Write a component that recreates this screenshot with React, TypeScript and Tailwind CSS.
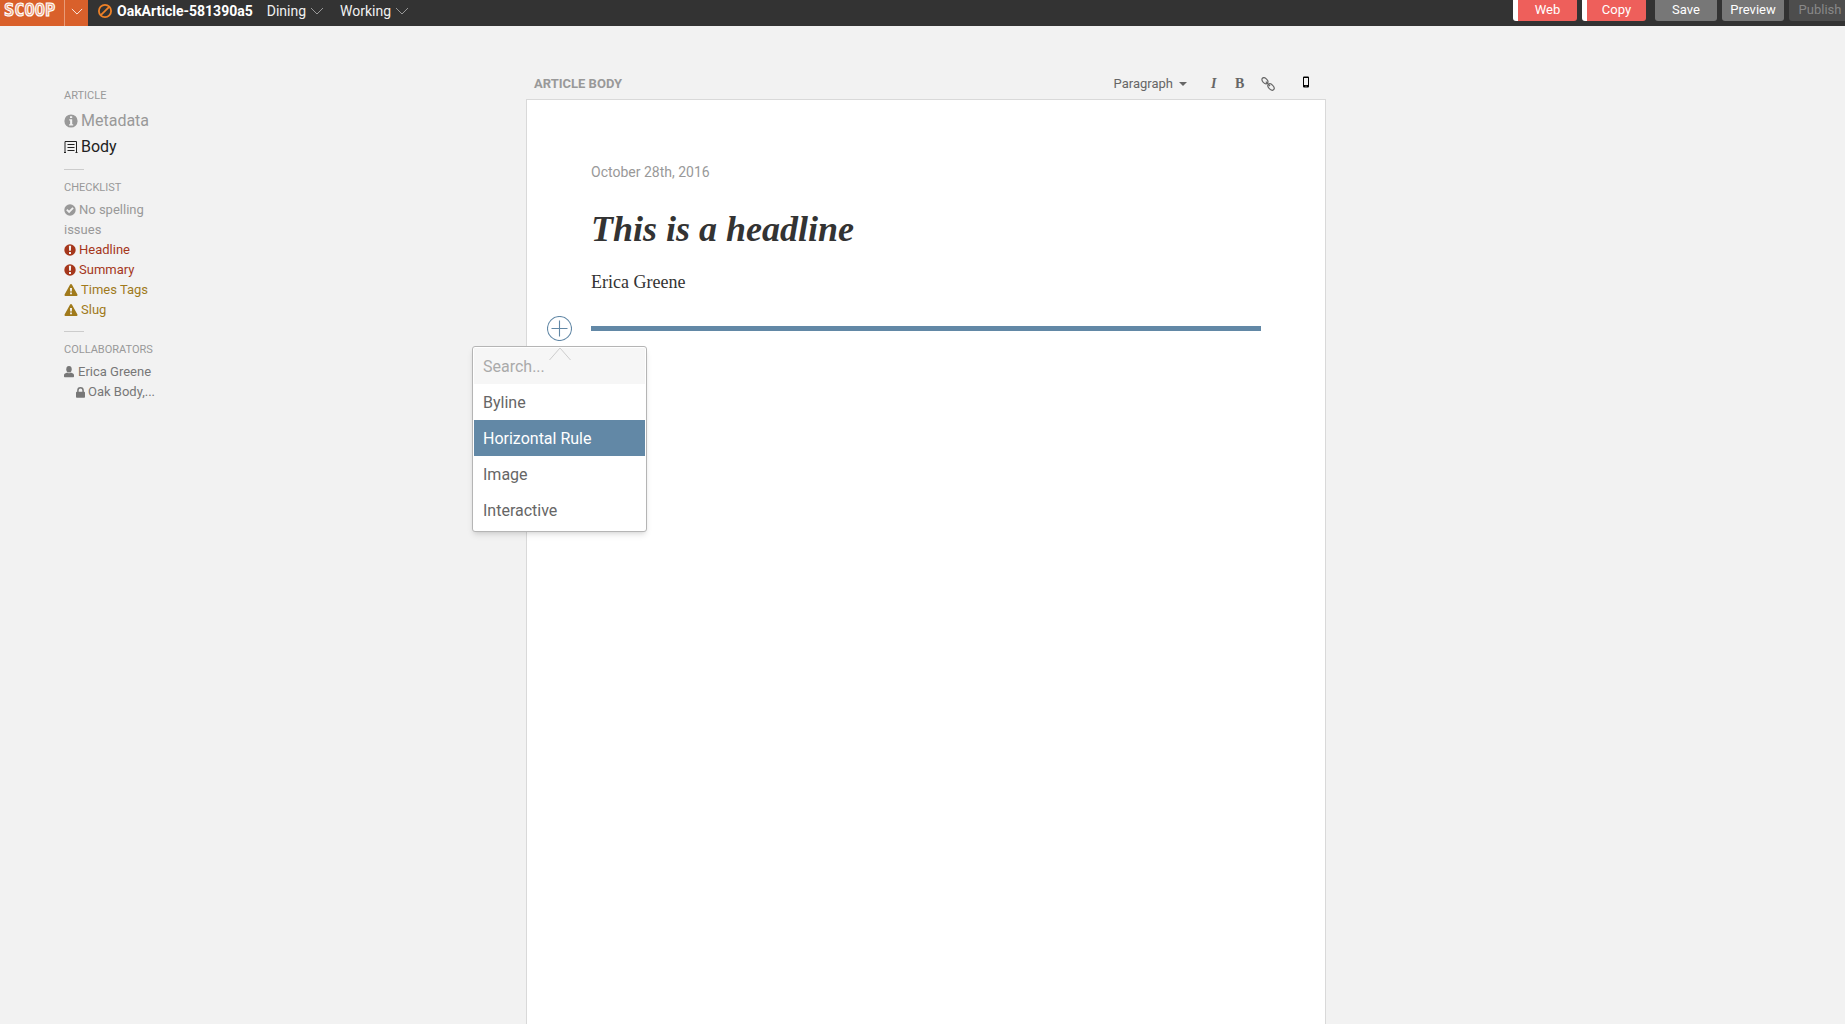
import React, { useState } from "react";

type IconProps = { className?: string };

const ChevronDown = ({ className }: IconProps) => (
  <svg className={className} viewBox="0 0 14 8" fill="none" stroke="currentColor" aria-hidden="true">
    <path d="M1 1l6 6 6-6" />
  </svg>
);

const BanIcon = ({ className }: IconProps) => (
  <svg className={className} viewBox="0 0 14 14" fill="none" stroke="currentColor" strokeWidth="1.800" aria-hidden="true">
    <circle cx="7" cy="7" r="6.100" />
    <path d="M11.200 2.800l-8.400 8.400" />
  </svg>
);

const InfoIcon = ({ className }: IconProps) => (
  <svg className={className} viewBox="0 0 14 14" aria-hidden="true">
    <circle cx="7" cy="7" r="6.600" fill="currentColor" />
    <path d="M6 2.200h2.200V4H6zM5.200 5.200h3v5h1v1.400H5.100v-1.400h1V6.500h-.9z" fill="#f2f2f2" />
  </svg>
);

const BodyIcon = ({ className }: IconProps) => (
  <svg className={className} viewBox="0 0 14 14" fill="none" stroke="currentColor" aria-hidden="true">
    <path d="M1 13V1.500h11.500V13M0 12.500h2M11.500 12.500h2M3.500 4.500h7M3.500 7.500h7M3.500 10.500h7" />
  </svg>
);

const CheckIcon = ({ className }: IconProps) => (
  <svg className={className} viewBox="0 0 12 12" aria-hidden="true">
    <circle cx="6" cy="6" r="5.700" fill="currentColor" />
    <path d="M2.800 5.700l2.300 2.300 4-4.100" fill="none" stroke="#f2f2f2" strokeWidth="1.800" />
  </svg>
);

const AlertIcon = ({ className }: IconProps) => (
  <svg className={className} viewBox="0 0 12 12" aria-hidden="true">
    <circle cx="6" cy="6" r="5.700" fill="currentColor" />
    <path d="M4.900 1.800h2.200l-.2 5H5.100zM5 8h2v1.900H5z" fill="#f2f2f2" />
  </svg>
);

const WarningIcon = ({ className }: IconProps) => (
  <svg className={className} viewBox="0 0 14 12" aria-hidden="true">
    <path d="M7 .1c.4 0 .7.200.9.500l5.500 10c.3.700 0 1.300-.7 1.300H1.300c-.7 0-1-.6-.7-1.300l5.500-10c.2-.3.500-.5.900-.5z" fill="currentColor" />
    <path d="M6 4h2l-.2 3.500H6.200zM6.100 8.600h1.800v1.600H6.100z" fill="#f2f2f2" />
  </svg>
);

const UserIcon = ({ className }: IconProps) => (
  <svg className={className} viewBox="0 0 10 12" fill="currentColor" aria-hidden="true">
    <ellipse cx="5" cy="3.200" rx="2.700" ry="3.200" />
    <path d="M0 9.200c0-1 .7-1.600 1.600-2l1.600-.6c1.100.8 2.500.8 3.600 0l1.600.6c.9.400 1.600 1 1.600 2v1.300c0 .4-.3.700-.7.700H.7c-.4 0-.7-.3-.7-.7z" />
  </svg>
);

const LockIcon = ({ className }: IconProps) => (
  <svg className={className} viewBox="0 0 9 11" aria-hidden="true">
    <rect y="4.700" width="9" height="6" rx=".8" fill="currentColor" />
    <path d="M1.900 5V3.400a2.600 2.600 0 015.200 0V5" fill="none" stroke="currentColor" strokeWidth="1.500" />
  </svg>
);

const LinkIcon = ({ className }: IconProps) => (
  <svg className={className} viewBox="0 0 14 14" fill="none" stroke="currentColor" strokeWidth="1.200" aria-hidden="true">
    <ellipse cx="3.900" cy="3.700" rx="3.500" ry="2.300" transform="rotate(45 3.900 3.700)" />
    <ellipse cx="10" cy="10" rx="3.700" ry="2.400" transform="rotate(45 10 10)" />
    <path d="M4.800 4.700l4.200 4.300" />
  </svg>
);

const PhoneIcon = ({ className }: IconProps) => (
  <svg className={className} viewBox="0 0 8 12" aria-hidden="true">
    <path
      d="M2 .5h4a1 1 0 011 1v9a1 1 0 01-1 1H2a1 1 0 01-1-1v-9a1 1 0 011-1zM2 2v7h4V2z"
      fill="currentColor"
      fillRule="evenodd"
    />
    <path d="M3.500 9.700h1v.8h-1z" fill="#f2f2f2" />
  </svg>
);

const PlusIcon = ({ className }: IconProps) => (
  <svg className={className} viewBox="0 0 25 25" fill="none" stroke="currentColor" strokeWidth="1.100" aria-hidden="true">
    <circle cx="12.500" cy="12.500" r="12" />
    <path d="M12.500 4.500v16M4.500 12.500h16" />
  </svg>
);

const MENU = ["Byline", "Horizontal Rule", "Image", "Interactive"];

function TopBar() {
  return (
    <header className="flex h-[26px] items-start overflow-hidden bg-[#333333] text-sm text-white">
      <a href="#home" aria-label="Scoop home" className="flex h-full w-16 flex-none bg-[#d9602b] pl-1">
        <span className="font-['DejaVu_Sans_Mono',monospace] text-[17px] leading-5 font-bold text-[#eda888] [-webkit-text-stroke:1px_white]">
          SCOOP
        </span>
      </a>
      <button aria-label="Open menu" className="flex h-full w-6 flex-none justify-center border-l border-[#e89b78] bg-[#d9602b] pt-2">
        <ChevronDown className="h-[7px] w-3" />
      </button>
      <nav className="flex h-[22px] min-w-0 flex-1 items-center pl-2.5">
        <BanIcon className="mr-[5px] size-3.5 flex-none text-[#ee8127]" />
        <h1 className="mr-3.5 font-bold">OakArticle-581390a5</h1>
        <button className="mr-4 flex items-center gap-1 text-[#f0f0f0]">
          Dining
          <ChevronDown className="h-2 w-3.5 text-[#999999]" />
        </button>
        <button className="flex items-center gap-1 text-[#f0f0f0]">
          Working
          <ChevronDown className="h-2 w-3.5 text-[#999999]" />
        </button>
      </nav>
      <div className="-mr-1.5 flex h-[21px] flex-none gap-[5px] text-[13px]">
        <button className="w-16 rounded-b-[3px] border-l-[5px] border-white bg-[#ee5f5b]">Web</button>
        <button className="mr-1 w-16 rounded-b-[3px] border-l-[5px] border-white bg-[#ee5f5b]">Copy</button>
        <button className="w-[62px] rounded-b-[3px] bg-[#777777]">Save</button>
        <button className="w-[62px] rounded-b-[3px] bg-[#777777]">Preview</button>
        <button className="w-[62px] rounded-b-[3px] bg-[#4d4d4d] text-[#888888]" disabled>
          Publish
        </button>
      </div>
    </header>
  );
}

function Sidebar() {
  return (
    <aside className="pt-[60px] pl-16 text-[13px] leading-5 text-[#999999]">
      <h2 className="text-[11px] leading-5">ARTICLE</h2>
      <ul className="mt-0.5 text-base leading-[26px]">
        <li>
          <a href="#metadata" className="flex items-center gap-[3px]">
            <InfoIcon className="size-3.5" />
            Metadata
          </a>
        </li>
        <li>
          <a href="#body" className="flex items-center gap-[3px] text-[#222222]">
            <BodyIcon className="size-3.5" />
            Body
          </a>
        </li>
      </ul>
      <hr className="mt-[9px] w-5 border-[#cccccc]" />
      <h2 className="mt-2 text-[11px] leading-5">CHECKLIST</h2>
      <ul className="mt-0.5 w-[100px]">
        <li>
          <CheckIcon className="mr-[3px] mb-0.5 inline size-3" />
          No spelling issues
        </li>
        <li className="flex items-center gap-[3px] text-[#a5371b]">
          <AlertIcon className="size-3" />
          Headline
        </li>
        <li className="flex items-center gap-[3px] text-[#a5371b]">
          <AlertIcon className="size-3" />
          Summary
        </li>
        <li className="flex items-center gap-[3px] text-[#a07a1c]">
          <WarningIcon className="h-3 w-3.5" />
          Times Tags
        </li>
        <li className="flex items-center gap-[3px] text-[#a07a1c]">
          <WarningIcon className="h-3 w-3.5" />
          Slug
        </li>
      </ul>
      <hr className="mt-[11px] w-5 border-[#cccccc]" />
      <h2 className="mt-2 text-[11px] leading-5">COLLABORATORS</h2>
      <ul className="mt-0.5 text-[#777777]">
        <li className="flex items-center gap-1">
          <UserIcon className="h-3 w-2.5" />
          Erica Greene
        </li>
        <li className="flex items-center gap-[3px] pl-3">
          <LockIcon className="h-[11px] w-[9px]" />
          Oak Body,...
        </li>
      </ul>
    </aside>
  );
}

function Toolbar() {
  return (
    <div className="flex h-[73px] items-end justify-between pr-4 pb-1 pl-2 text-[#666666]">
      <h2 className="text-[13px] leading-[22px] font-bold text-[#999999]">ARTICLE BODY</h2>
      <div className="flex h-[22px] items-center">
        <button className="mr-6 flex items-center gap-1.5 text-[13px]">
          Paragraph
          <svg className="h-1 w-2" viewBox="0 0 8 4" aria-hidden="true">
            <path d="M0 0h8L4 4z" fill="currentColor" />
          </svg>
        </button>
        <button aria-label="Italic" className="w-6 text-left font-['Liberation_Serif',serif] text-sm font-bold italic">
          I
        </button>
        <button aria-label="Bold" className="w-[26px] text-left font-['Liberation_Serif',serif] text-sm font-bold">
          B
        </button>
        <button aria-label="Link" className="mr-[27px]">
          <LinkIcon className="size-3.5" />
        </button>
        <button aria-label="Mobile preview" className="mb-1 text-black">
          <PhoneIcon className="h-3 w-2" />
        </button>
      </div>
    </div>
  );
}

function InsertMenu() {
  const [active, setActive] = useState("Horizontal Rule");
  return (
    <div className="absolute top-[30px] -left-[75px] w-[175px] rounded-[3px] border border-[#b5b5b5] bg-white p-px pb-[3px] text-base text-[#666666] shadow-md">
      <input
        aria-label="Search"
        placeholder="Search..."
        className="block h-9 w-full bg-[#f6f6f6] px-[9px] outline-none placeholder:text-[#aaaaaa]"
      />
      <svg className="absolute top-0 left-[76px] h-[13px] w-[22px]" viewBox="0 0 22 13" aria-hidden="true">
        <path d="M.5 13L11 1l10.500 12" fill="#f6f6f6" stroke="#cccccc" />
      </svg>
      {MENU.map((item) => (
        <button
          key={item}
          onClick={() => setActive(item)}
          className={
            item === active
              ? "block h-9 w-full bg-[#6288a6] px-[9px] pt-0.5 text-left text-white"
              : "block h-9 w-full px-[9px] pt-0.5 text-left"
          }
        >
          {item}
        </button>
      ))}
    </div>
  );
}

export default function App() {
  return (
    <div className="flex min-h-screen flex-col bg-[#f2f2f2] font-[Roboto,sans-serif]">
      <TopBar />
      <div className="grid flex-1 grid-cols-[526fr_800fr_519fr]">
        <Sidebar />
        <main className="flex flex-col">
          <Toolbar />
          <article className="flex-1 border border-b-0 border-[#d9d9d9] bg-white px-16 pt-[62px] text-[#333333]">
            <time className="block text-sm leading-5 text-[#999999]">October 28th, 2016</time>
            <h2 className="mt-[27px] font-['Liberation_Serif',serif] text-4xl leading-10 font-bold italic">
              This is a headline
            </h2>
            <p className="mt-[21px] font-['Liberation_Serif',serif] text-lg leading-6">Erica Greene</p>
            <div className="relative mt-[22px] flex h-[25px] items-center">
              <hr className="w-full border-t-[5px] border-[#6288a6]" />
              <div className="absolute top-0 -left-11">
                <button aria-label="Insert block" className="block text-[#6288a6]">
                  <PlusIcon className="size-[25px]" />
                </button>
                <InsertMenu />
              </div>
            </div>
          </article>
        </main>
      </div>
    </div>
  );
}
